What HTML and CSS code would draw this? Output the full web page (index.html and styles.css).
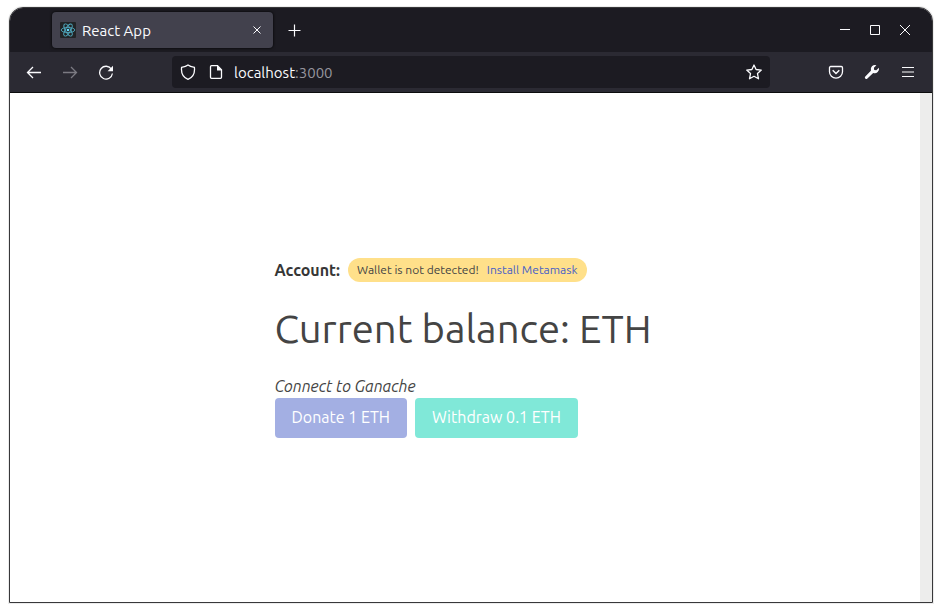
FILE: index.html
```
<!DOCTYPE html>
<html lang="en">
<head>
<meta charset="utf-8">
<meta name="viewport" content="width=device-width, initial-scale=1">
<title>React App</title>
<link rel="stylesheet" href="styles.css">
</head>
<body>
<div class="window">
  <header class="titlebar">
    <div class="tab">
      <svg class="favicon" viewBox="0 0 16 16" aria-hidden="true">
        <rect width="16" height="16" rx="1" fill="#222426"/>
        <g fill="none" stroke="#4fa9bf" stroke-width="0.9">
          <ellipse cx="8" cy="8" rx="6.8" ry="2.6"/>
          <ellipse cx="8" cy="8" rx="6.8" ry="2.6" transform="rotate(60 8 8)"/>
          <ellipse cx="8" cy="8" rx="6.8" ry="2.6" transform="rotate(120 8 8)"/>
        </g>
        <circle cx="8" cy="8" r="1.3" fill="#61dafb"/>
      </svg>
      <span class="tab-title">React App</span>
      <button class="icon-button tab-close" aria-label="Close tab">
        <svg viewBox="0 0 16 16"><path d="M4.5 4.5l7 7M11.5 4.5l-7 7"/></svg>
      </button>
    </div>
    <button class="icon-button new-tab" aria-label="New tab">
      <svg viewBox="0 0 16 16"><path d="M7.5 2.5v12M1.5 8.500h12" stroke-width="1.2"/></svg>
    </button>
    <div class="window-controls">
      <button class="icon-button" aria-label="Minimize"><svg viewBox="0 0 16 16"><path d="M3 7.500h10"/></svg></button>
      <button class="icon-button" aria-label="Maximize"><svg viewBox="0 0 16 16"><path d="M3.500 3.500h9v9h-9z"/></svg></button>
      <button class="icon-button" aria-label="Close"><svg viewBox="0 0 16 16"><path d="M3 3l10 10M13 3L3 13"/></svg></button>
    </div>
  </header>
  <nav class="toolbar" aria-label="Navigation">
    <div class="tools">
      <button class="icon-button" aria-label="Back"><svg viewBox="0 0 16 16"><path d="M15 8.500H1.800M7 3L1.500 8.500 7 14" stroke-width="1.300"/></svg></button>
      <button class="icon-button" aria-label="Forward" disabled><svg viewBox="0 0 16 16"><path d="M1 8.500h13.200M9 3l5.500 5.500L9 14" stroke-width="1.300"/></svg></button>
      <button class="icon-button" aria-label="Reload"><svg viewBox="0 0 16 16"><path d="M13.400 5.100A6.400 6.400 0 1 0 14.400 9.500" stroke-width="1.300"/><path class="solid" d="M15 1.800v5.400H9.600z"/></svg></button>
    </div>
    <div class="address">
      <svg viewBox="0 0 16 16" aria-hidden="true"><path d="M8 1C6.300 2.400 3.800 3 1.600 3.300 1 8.500 3 13.300 8 15.300c5-2 7-6.800 6.400-12C12.200 3 9.700 2.400 8 1z" stroke-width="1.300"/></svg>
      <svg viewBox="0 0 16 16" aria-hidden="true"><path d="M3.500 1.700H9.500l4 4v7.600a1 1 0 0 1-1 1h-9a1 1 0 0 1-1-1V2.700a1 1 0 0 1 1-1z" stroke-width="1.300"/><path class="solid" d="M9 1.500l5 5H9z"/></svg>
      <span class="url">localhost<span class="port">:3000</span></span>
      <button class="icon-button" aria-label="Bookmark this page"><svg viewBox="0 0 16 16"><path d="M8 1l2.100 4.500 5.200.6-3.800 3.500 1 5.200L8 12.300l-4.500 2.500 1-5.200L.7 6.100l5.200-.6z" stroke-width="1.300" stroke-linejoin="round"/></svg></button>
    </div>
    <div class="tools">
      <button class="icon-button" aria-label="Save to Pocket"><svg viewBox="0 0 16 16"><path d="M2.700 2.500h10.600a1.200 1.200 0 0 1 1.200 1.200V7.800a6.500 6.300 0 0 1-13 0V3.700a1.200 1.200 0 0 1 1.200-1.200z" stroke-width="1.300"/><path d="M4.700 6.300L8 9.500 11.300 6.300" stroke-width="1.500"/></svg></button>
      <button class="icon-button" aria-label="Developer tools"><svg viewBox="0 0 16 16"><path class="solid" d="M12.400 1.300A4.300 4.300 0 0 0 6.900 6.700L1.300 12.400a1.400 1.400 0 0 0 2.100 2.100l5.800-5.600A4.300 4.300 0 0 0 14.900 3.700L12.300 6.200 10.200 5.900 9.900 3.800z"/></svg></button>
      <button class="icon-button" aria-label="Menu"><svg viewBox="0 0 16 16"><path d="M2 3.500h12M2 8h12M2 12.500h12" stroke-width="1.200"/></svg></button>
    </div>
  </nav>
  <div class="viewport">
    <main class="page">
      <div class="content">
        <div class="account">
          <strong>Account:</strong>
          <div class="notice">Wallet is not detected!<a href="#">Install Metamask</a></div>
        </div>
        <h1>Current balance: ETH</h1>
        <p class="hint">Connect to Ganache</p>
        <div class="actions">
          <button class="button donate" disabled>Donate 1 ETH</button>
          <button class="button withdraw" disabled>Withdraw 0.1 ETH</button>
        </div>
      </div>
    </main>
    <div class="scroll-track"></div>
  </div>
</div>
</body>
</html>
```
FILE: styles.css
```
* {
  box-sizing: border-box;
}

body {
  margin: 0;
  min-height: 100vh;
  display: flex;
  padding: 7px 9px 9px;
  background: #fff;
  color: #444;
  font: 16px/24px Ubuntu, "Noto Sans", sans-serif;
}

button {
  margin: 0;
  padding: 0;
  border: 0;
  background: none;
  color: inherit;
  font: inherit;
}

.window {
  flex: 1;
  display: flex;
  flex-direction: column;
  border: 1px solid #38383a;
  border-radius: 14px 14px 0 0;
  box-shadow: 0 0 0 1px #ececec;
  overflow: hidden;
}

.titlebar {
  display: flex;
  align-items: center;
  height: 44px;
  padding: 0 19px 0 42px;
  background: #1c1b22;
  color: #fbfbfe;
}

.tab {
  display: flex;
  align-items: center;
  gap: 6px;
  width: 221px;
  height: 36px;
  padding: 0 8px;
  border-radius: 4px;
  background: #42414d;
  box-shadow: 0 0 3px #000;
  font-size: 15px;
}

.tab-title,
.url {
  flex: 1;
  padding-top: 2px;
}

svg {
  display: block;
  width: 16px;
  height: 16px;
  flex: none;
  fill: none;
  stroke: currentColor;
}

.solid {
  fill: currentColor;
  stroke: none;
}

.favicon {
  stroke: none;
}

.new-tab {
  margin-left: 14px;
}

.window-controls {
  display: flex;
  gap: 14px;
  margin-left: auto;
}

.toolbar {
  display: flex;
  align-items: center;
  justify-content: space-between;
  height: 41px;
  padding: 0 16px;
  border-bottom: 1px solid #0c0c0d;
  background: #2b2a33;
  color: #fbfbfe;
}

.tools {
  display: flex;
  gap: 20px;
}

.icon-button:disabled {
  color: #7b7a82;
}

.address {
  flex: 1;
  display: flex;
  align-items: center;
  gap: 12px;
  height: 32px;
  margin: 0 58px;
  padding: 0 8px;
  border-radius: 4px;
  background: #1c1b22;
  font-size: 15px;
}

.url {
  margin-left: -2px;
}

.port {
  color: #96959d;
}

.viewport {
  flex: 1;
  display: flex;
}

.page {
  flex: 1;
  display: flex;
  align-items: center;
  justify-content: center;
}

.scroll-track {
  width: 12px;
  background: #ededec;
}

.content {
  min-width: 381px;
}

.account {
  display: flex;
  align-items: center;
  gap: 8px;
}

.account strong {
  color: #363636;
}

.notice {
  display: flex;
  gap: 8px;
  padding: 0 9px;
  border-radius: 12px;
  background: #ffe08a;
  font-size: 12px;
}

.notice a {
  color: #485fc7;
  text-decoration: none;
}

h1 {
  margin: 25px 0 23px;
  font-size: 40px;
  font-weight: 400;
  line-height: 44px;
}

.hint {
  margin: 0;
  font-style: italic;
}

.actions {
  display: flex;
  gap: 8px;
}

.button {
  height: 40px;
  padding: 0 17px 2px;
  border-radius: 4px;
  color: #fff;
}

.donate {
  background: #a3afe3;
}

.withdraw {
  background: #80e8d8;
}
```
